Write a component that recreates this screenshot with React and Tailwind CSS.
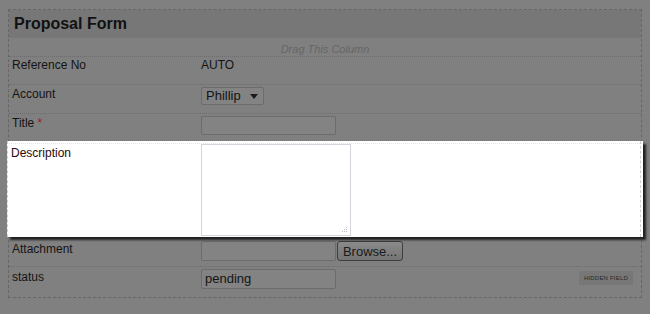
import React from "react";

function Row({ label, children, className = "", right = null }) {
  return (
    <div className={`flex items-start border-t border-dotted border-[#6c6c6c] ${className}`}>
      <div className="w-[192px] shrink-0 pl-[3px] leading-[16px]">{label}</div>
      <div className="flex-1 flex items-center">{children}</div>
      {right}
    </div>
  );
}

export default function App() {
  return (
    <div
      className="w-[650px] h-[314px] bg-[#808080] pt-[9px] px-[8px] text-[12px] text-[#141414] overflow-hidden"
      style={{ fontFamily: '"Liberation Sans", Arial, sans-serif' }}
    >
      <div className="w-[634px] border border-dashed border-[#666666]">
        {/* Header */}
        <div className="h-[28px] bg-[#777777] flex items-center pl-[5px]">
          <h2 className="text-[16px] font-bold text-[#111]">Proposal Form</h2>
        </div>

        {/* Drag row */}
        <div className="h-[18px] flex items-center justify-center pt-[4px]">
          <span className="italic text-[11px] text-[#666] leading-none">Drag This Column</span>
        </div>

        <Row label="Reference No" className="h-[28px]">
          <span className="leading-[16px]">AUTO</span>
        </Row>

        <Row label="Account" className="h-[29px] pt-[1px]">
          <div className="mt-[1px] w-[63px] h-[18px] border border-[#6c6c6c] rounded-[2px] bg-[#838383] flex items-center justify-between px-[4px] text-[13px]">
            <span>Phillip</span>
            <svg width="8" height="5" viewBox="0 0 8 5" className="mr-[1px]">
              <path d="M0 0h8L4 5z" fill="#1a1a1a" />
            </svg>
          </div>
        </Row>

        <Row
          label={
            <span>
              Title <span className="text-[#9e1b1b]">*</span>
            </span>
          }
          className="h-[28px] pt-[1px]"
        >
          <div className="mt-[1px] w-[135px] h-[19px] border border-[#6c6c6c] rounded-[2px] bg-[#838383]" />
        </Row>

        {/* Description highlighted row */}
        <div className="relative -mx-[2px] h-[96px] bg-white shadow-[3px_3px_2px_rgba(0,0,0,0.75)] flex items-start border-l border-dashed border-[#d0d0d0]">
          <div className="absolute left-[1px] right-[1px] top-[2px] border-t border-dotted border-[#e2e2e2]" />
          <div className="w-[193px] shrink-0 pl-[3px] pt-[3px] text-[#2a0a0a]">Description</div>
          <div className="relative mt-[3px] w-[150px] h-[92px] border border-[#d4d4dc] bg-white">
            <svg width="7" height="7" viewBox="0 0 7 7" className="absolute right-[2px] bottom-[2px]">
              <rect x="5" y="1" width="1" height="1" fill="#bbb" />
              <rect x="3" y="3" width="1" height="1" fill="#bbb" />
              <rect x="5" y="3" width="1" height="1" fill="#bbb" />
              <rect x="1" y="5" width="1" height="1" fill="#bbb" />
              <rect x="3" y="5" width="1" height="1" fill="#bbb" />
              <rect x="5" y="5" width="1" height="1" fill="#bbb" />
            </svg>
          </div>
          <div className="flex-1" />
          <div className="w-0 h-full border-r border-dashed border-[#d0d0d0] mr-[2px]" />
        </div>

        <div className="flex items-start h-[29px] pt-[1px]">
          <div className="w-[192px] shrink-0 pl-[3px] pt-[2px]">Attachment</div>
          <div className="flex items-center mt-[3px]">
            <div className="w-[135px] h-[20px] border border-[#6c6c6c] rounded-[2px] bg-[#838383]" />
            <button className="ml-[1px] w-[66px] h-[20px] border border-[#3e3e3e] rounded-[3px] bg-gradient-to-b from-[#8a8a8a] to-[#747474] text-[13px] text-[#1a1a1a] leading-none">
              Browse...
            </button>
          </div>
        </div>

        <Row
          label="status"
          className="h-[31px] pt-[2px]"
          right={
            <span className="mt-[2px] mr-[8px] bg-[#777777] px-[5px] py-[4px] text-[6px] text-[#2a2a2a] tracking-[0.2px] leading-none">
              HIDDEN FIELD
            </span>
          }
        >
          <div className="w-[135px] h-[20px] border border-[#6c6c6c] rounded-[2px] bg-[#838383] flex items-center pl-[3px] text-[13px]">
            pending
          </div>
        </Row>
      </div>
    </div>
  );
}
